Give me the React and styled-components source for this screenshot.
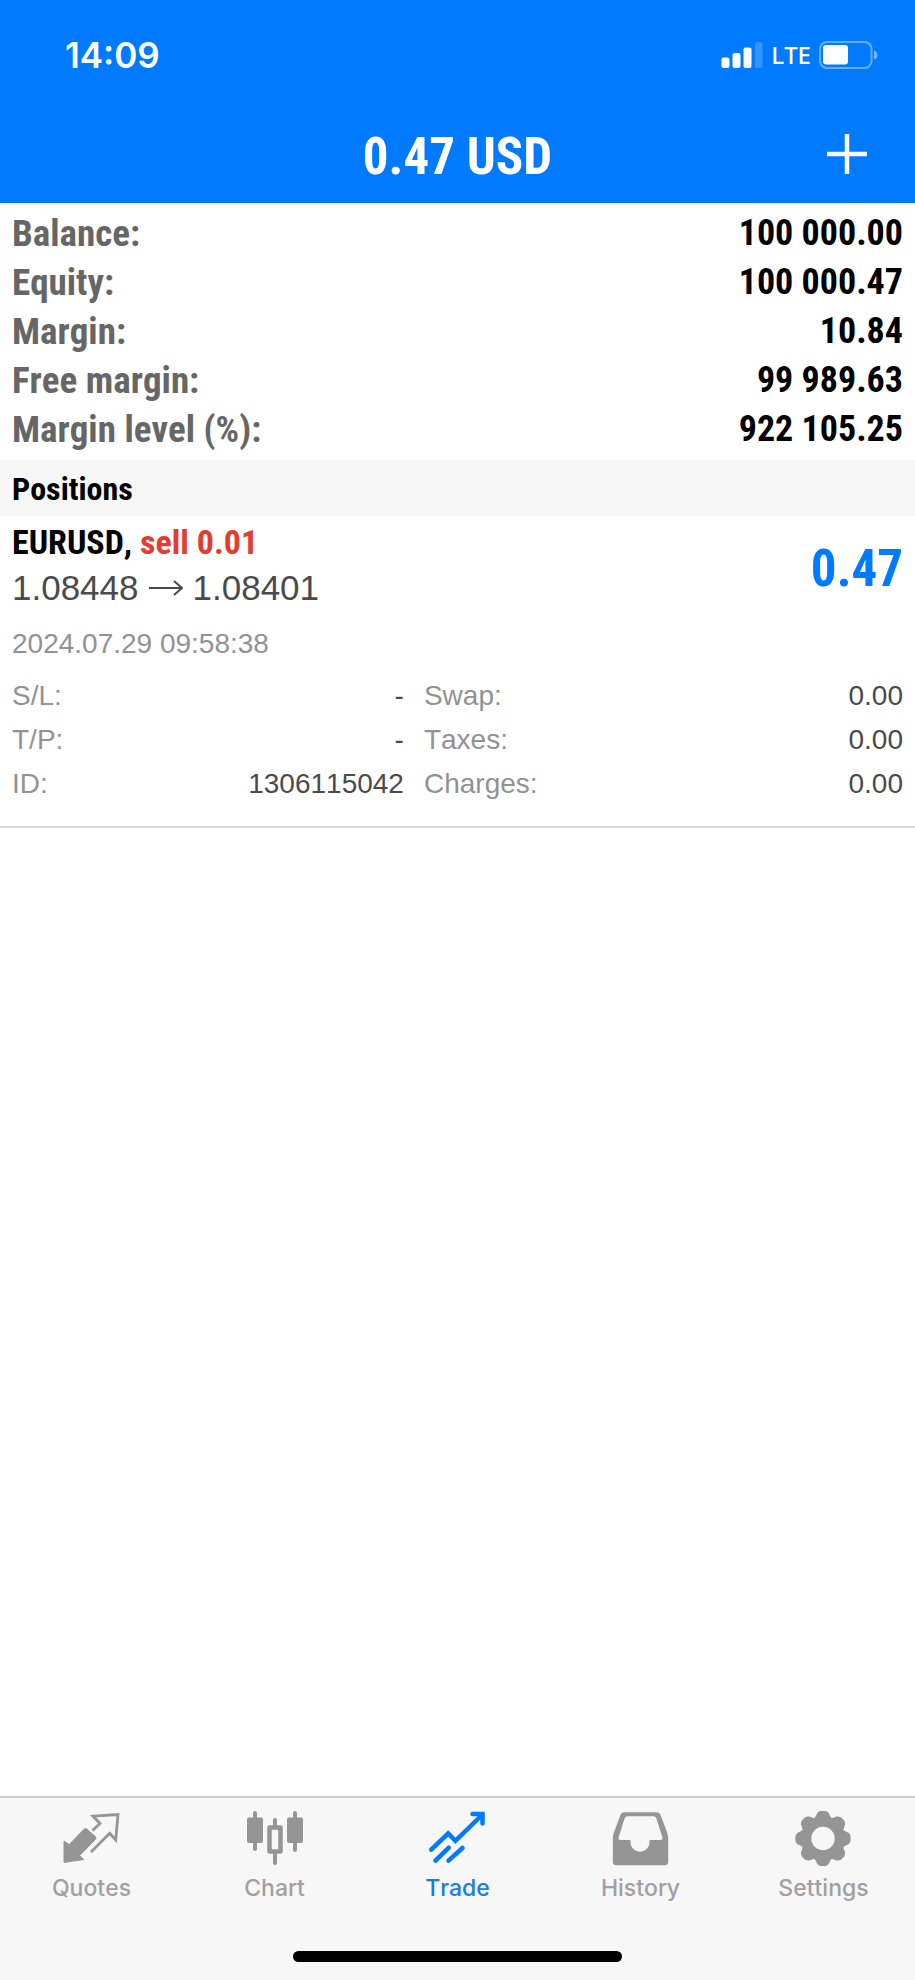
import React, { useState } from 'react';
import styled, { createGlobalStyle } from 'styled-components';

const GlobalStyle = createGlobalStyle`
    * {
        box-sizing: border-box;
    }

    body {
        margin: 0;
        background: #ffffff;
        font-family: "Liberation Sans", Arial, sans-serif;
        font-kerning: none;
    }

    button {
        margin: 0;
        padding: 0;
        border: none;
        background: none;
        font: inherit;
        cursor: pointer;
    }
`;

const condensed = '"Roboto Condensed", Roboto, "Liberation Sans", sans-serif';

const Screen = styled.div`
    display: flex;
    flex-direction: column;
    min-height: 100vh;
`;

const Header = styled.header`
    background: #007aff;
    color: #ffffff;
`;

const StatusBar = styled.div`
    display: flex;
    align-items: center;
    justify-content: space-between;
    height: 110px;
    padding: 0 36px 0 65px;
`;

const Clock = styled.time`
    font-family: Inter, sans-serif;
    font-size: 35px;
    font-weight: 600;
`;

const StatusIcons = styled.div`
    display: flex;
    align-items: center;
    gap: 8px;
`;

const Network = styled.span`
    font-family: "Noto Sans", sans-serif;
    font-size: 24px;
    font-weight: 500;
    line-height: 28px;
`;

const NavBar = styled.div`
    display: grid;
    grid-template-columns: 1fr auto 1fr;
    align-items: center;
    height: 93px;
    padding: 0 46px;
`;

const Title = styled.h1`
    grid-column: 2;
    margin: 0;
    font-family: ${condensed};
    font-size: 51px;
    font-weight: bold;
`;

const AddButton = styled.button`
    justify-self: end;
    display: flex;
    padding-bottom: 6px;
    color: #ffffff;
`;

const Content = styled.main`
    flex: 1;
`;

const Summary = styled.dl`
    margin: 0;
    padding: 6px 12px;
    font-family: ${condensed};
    font-weight: bold;
    line-height: 49px;
`;

const SummaryRow = styled.div`
    display: flex;
    justify-content: space-between;
`;

const SummaryLabel = styled.dt`
    color: #666666;
    font-size: 37px;
`;

const SummaryValue = styled.dd`
    margin: 0;
    color: #000000;
    font-size: 36px;
`;

const SectionTitle = styled.h2`
    margin: 0;
    padding: 2px 12px 0;
    background: #f7f7f7;
    font-family: ${condensed};
    font-size: 32px;
    font-weight: bold;
    line-height: 54px;
`;

const Position = styled.article`
    padding: 6px 12px 20px;
    border-bottom: 2px solid #d9d9d9;
`;

const PositionHead = styled.div`
    display: flex;
    align-items: center;
    justify-content: space-between;
`;

const Symbol = styled.h3`
    margin: 0;
    font-family: ${condensed};
    font-size: 34px;
    font-weight: bold;
    line-height: 40px;
`;

const Side = styled.span`
    color: #e53b30;
`;

const Prices = styled.div`
    display: flex;
    align-items: center;
    gap: 10px;
    color: #4a4a4c;
    font-size: 35px;
    line-height: 52px;
`;

const Profit = styled.strong`
    color: #007aff;
    font-family: ${condensed};
    font-size: 51px;
`;

const OpenTime = styled.time`
    display: block;
    color: #929292;
    font-size: 28px;
    line-height: 60px;
`;

const Details = styled.div`
    display: grid;
    grid-template-columns: 9fr 11fr;
    column-gap: 20px;
    font-size: 28px;
    line-height: 44px;
`;

const DetailList = styled.dl`
    margin: 0;
`;

const DetailRow = styled.div`
    display: flex;
    justify-content: space-between;
`;

const DetailLabel = styled.dt`
    color: #929292;
`;

const DetailValue = styled.dd`
    margin: 0;
    color: #4a4a4c;
`;

const TabBar = styled.footer`
    padding-bottom: 18px;
    border-top: 2px solid #cccccc;
    background: #f7f7f7;
`;

const Tabs = styled.nav`
    display: grid;
    grid-template-columns: repeat(5, 1fr);
    padding: 12px 0 49px;
`;

const Tab = styled.button`
    display: flex;
    flex-direction: column;
    align-items: center;
    gap: 8px;
    color: ${(props) => (props.$active ? '#007aff' : '#959595')};
`;

const TabLabel = styled.span`
    color: ${(props) => (props.$active ? '#177be8' : '#a0a0a0')};
    font-family: Inter, sans-serif;
    font-size: 23px;
    font-weight: 500;
    line-height: 28px;
`;

const HomeIndicator = styled.div`
    width: 36%;
    height: 11px;
    margin: 0 auto;
    border-radius: 6px;
    background: #000000;
`;

const SignalIcon = () => (
    <svg width="42" height="26" viewBox="0 0 42 26" fill="#ffffff" aria-hidden="true">
        <rect x="0.5" y="15.5" width="8" height="10.5" rx="2" />
        <rect x="11.5" y="11" width="8" height="15" rx="2" />
        <rect x="22.5" y="5.5" width="8" height="20.5" rx="2" />
        <rect x="34" y="0" width="7.5" height="26" rx="2" opacity="0.2" />
    </svg>
);

const BatteryIcon = () => (
    <svg width="60" height="28" viewBox="0 0 60 28" aria-hidden="true">
        <rect x="1" y="1" width="51.5" height="26" rx="7" fill="none" stroke="#ffffff" strokeWidth="2" opacity="0.4" />
        <rect x="4" y="4" width="25" height="19.5" rx="3" fill="#ffffff" />
        <path d="M55 9.5c2.4 1 3.6 2.6 3.6 4.5s-1.2 3.5-3.6 4.5z" fill="#ffffff" opacity="0.45" />
    </svg>
);

const PlusIcon = () => (
    <svg width="44" height="44" viewBox="0 0 44 44" stroke="#ffffff" strokeWidth="4.5" aria-hidden="true">
        <path d="M22 2v40M2 22h40" />
    </svg>
);

const ArrowIcon = () => (
    <svg width="34" height="18" viewBox="0 0 34 18" fill="none" stroke="currentColor" strokeWidth="2" aria-hidden="true">
        <path d="M0 9h32.5M25 2l8 7l-8 7" />
    </svg>
);

const QuotesIcon = () => (
    <svg width="60" height="56" viewBox="0 0 60 56" aria-hidden="true">
        <path
            d="M2 31l5.2 3.6L22 19.3q1.5-1.5 3 0l8.3 7.2q1.3 1.5 0 3L17.7 45.5l4 4L2 52.500z"
            fill="currentColor"
            stroke="currentColor"
            strokeLinejoin="round"
        />
        <path d="M30.5 20.5l7.5-7-7-7.300L56 4.500 53.700 30l-6-6.700L29 42" fill="none" stroke="currentColor" strokeWidth="2.800" />
    </svg>
);

const ChartIcon = () => (
    <svg width="60" height="56" viewBox="0 0 60 56" fill="none" stroke="currentColor" aria-hidden="true">
        <path d="M10 3v36M50 3v37M30 10v6M30 43v10" strokeWidth="4" strokeLinecap="round" />
        <rect x="2" y="7.5" width="16" height="25.5" rx="2" fill="currentColor" stroke="none" />
        <rect x="42" y="7.5" width="16" height="25.5" rx="2" fill="currentColor" stroke="none" />
        <rect x="24.5" y="17.5" width="11" height="24" strokeWidth="4.5" strokeLinejoin="round" />
    </svg>
);

const TradeIcon = () => (
    <svg
        width="60"
        height="56"
        viewBox="0 0 60 56"
        fill="none"
        stroke="currentColor"
        strokeWidth="4.5"
        strokeLinecap="round"
        aria-hidden="true"
    >
        <path d="M3.2 39.7L20.2 23.5l7.2 7.3L54 5" />
        <path d="M44.5 4H54.5V13.5" />
        <path d="M7.5 50.7l13.3-13M20.5 50.7l14-12.7" />
    </svg>
);

const HistoryIcon = () => (
    <svg width="60" height="56" viewBox="0 0 60 56" fill="currentColor" fillRule="evenodd" aria-hidden="true">
        <path d="M13.5 2.2h32q3 0 4.2 3l6.3 17q1.2 3.5 1.2 6.5v23q0 3.5-3.5 3.5H5.3q-3.5 0-3.5-3.5v-23q0-3 1.2-6.5l6.3-17q1.2-3 4.2-3z M16.5 6.3q-2 0-2.8 2L7.7 27q-.8 3 1.5 3h10.3v2.5a9.5 9.2 0 0 0 19 0V30h11.3q2.3 0 1.5-3l-6-18.7q-.8-2-2.8-2z" />
    </svg>
);

const toPoint = (radius, degrees) => {
    const angle = (degrees * Math.PI) / 180;
    return `${29 + radius * Math.cos(angle)},${28.5 + radius * Math.sin(angle)}`;
};

// eight rounded teeth around the hub
const gearPoints = Array.from({ length: 8 }, (_, i) => i * 45)
    .map((deg) => [
        toPoint(21, deg - 19),
        toPoint(22.5, deg - 15),
        toPoint(25.2, deg - 10),
        toPoint(26.2, deg - 5),
        toPoint(26.2, deg + 5),
        toPoint(25.2, deg + 10),
        toPoint(22.5, deg + 15),
        toPoint(21, deg + 19),
    ].join(' '))
    .join(' ');

const SettingsIcon = () => (
    <svg width="60" height="56" viewBox="0 0 60 56" fill="none" aria-hidden="true">
        <polygon points={gearPoints} fill="currentColor" stroke="currentColor" strokeWidth="3" strokeLinejoin="round" />
        <circle cx="29" cy="28.5" r="11.7" fill="#f7f7f7" />
    </svg>
);

const summary = [
    { label: 'Balance:', value: '100 000.00' },
    { label: 'Equity:', value: '100 000.47' },
    { label: 'Margin:', value: '10.84' },
    { label: 'Free margin:', value: '99 989.63' },
    { label: 'Margin level (%):', value: '922 105.25' },
];

const orderDetails = [
    { label: 'S/L:', value: '-' },
    { label: 'T/P:', value: '-' },
    { label: 'ID:', value: '1306115042' },
];

const costDetails = [
    { label: 'Swap:', value: '0.00' },
    { label: 'Taxes:', value: '0.00' },
    { label: 'Charges:', value: '0.00' },
];

const tabs = [
    { name: 'Quotes', Icon: QuotesIcon },
    { name: 'Chart', Icon: ChartIcon },
    { name: 'Trade', Icon: TradeIcon },
    { name: 'History', Icon: HistoryIcon },
    { name: 'Settings', Icon: SettingsIcon },
];

const DetailColumn = ({ rows }) => (
    <DetailList>
        {rows.map((row) => (
            <DetailRow key={row.label}>
                <DetailLabel>{row.label}</DetailLabel>
                <DetailValue>{row.value}</DetailValue>
            </DetailRow>
        ))}
    </DetailList>
);

const App = () => {
    const [activeTab, setActiveTab] = useState('Trade');

    return (
        <Screen>
            <GlobalStyle />
            <Header>
                <StatusBar>
                    <Clock>14:09</Clock>
                    <StatusIcons>
                        <SignalIcon />
                        <Network>LTE</Network>
                        <BatteryIcon />
                    </StatusIcons>
                </StatusBar>
                <NavBar>
                    <Title>0.47 USD</Title>
                    <AddButton type="button" aria-label="New order">
                        <PlusIcon />
                    </AddButton>
                </NavBar>
            </Header>
            <Content>
                <Summary>
                    {summary.map((row) => (
                        <SummaryRow key={row.label}>
                            <SummaryLabel>{row.label}</SummaryLabel>
                            <SummaryValue>{row.value}</SummaryValue>
                        </SummaryRow>
                    ))}
                </Summary>
                <SectionTitle>Positions</SectionTitle>
                <Position>
                    <PositionHead>
                        <div>
                            <Symbol>EURUSD, <Side>sell 0.01</Side></Symbol>
                            <Prices>
                                <span>1.08448</span>
                                <ArrowIcon />
                                <span>1.08401</span>
                            </Prices>
                        </div>
                        <Profit>0.47</Profit>
                    </PositionHead>
                    <OpenTime>2024.07.29 09:58:38</OpenTime>
                    <Details>
                        <DetailColumn rows={orderDetails} />
                        <DetailColumn rows={costDetails} />
                    </Details>
                </Position>
            </Content>
            <TabBar>
                <Tabs>
                    {tabs.map(({ name, Icon }) => (
                        <Tab
                            key={name}
                            type="button"
                            $active={name === activeTab}
                            onClick={() => setActiveTab(name)}
                        >
                            <Icon />
                            <TabLabel $active={name === activeTab}>{name}</TabLabel>
                        </Tab>
                    ))}
                </Tabs>
                <HomeIndicator />
            </TabBar>
        </Screen>
    );
};

export default App;
